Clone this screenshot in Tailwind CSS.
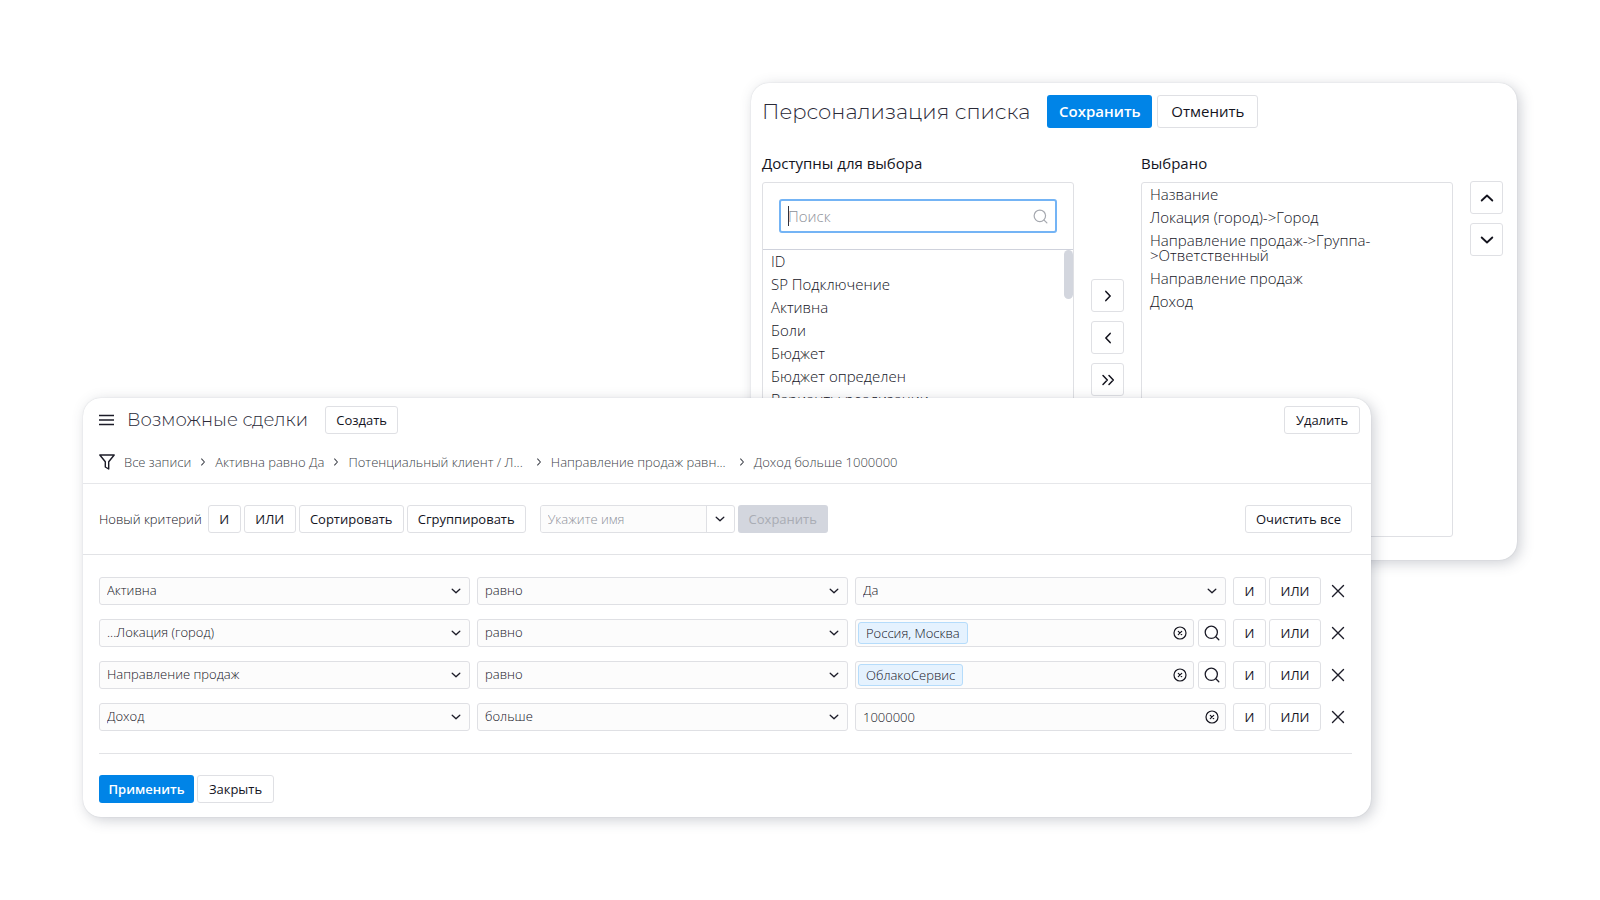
<!DOCTYPE html>
<html lang="ru">
<head>
<meta charset="utf-8">
<meta name="viewport" content="width=device-width, initial-scale=1">
<title>Возможные сделки</title>
<script src="https://cdn.jsdelivr.net/npm/@tailwindcss/browser@4"></script>
</head>
<body class="min-h-screen bg-white font-['Open_Sans',sans-serif] text-[13px] leading-5 font-light text-[#14141e]">

<svg class="hidden" aria-hidden="true">
  <symbol id="down" viewBox="0 0 10 10"><path d="M1.2 3.2 5 6.8 8.8 3.2" fill="none" stroke="currentColor" stroke-width="1.3" stroke-linecap="round" stroke-linejoin="round"/></symbol>
  <symbol id="search" viewBox="0 0 16 16"><circle cx="7.3" cy="7.3" r="6.1" fill="none" stroke="currentColor" stroke-width="1.3"/><path d="m11.8 11.8 3 3" stroke="currentColor" stroke-width="1.3" stroke-linecap="round"/></symbol>
  <symbol id="clear" viewBox="0 0 14 14"><g fill="none" stroke="currentColor" stroke-width="1.2" stroke-linecap="round"><circle cx="7" cy="7" r="6"/><path d="m5.300 5.300 3.400 3.400M8.700 5.300 5.300 8.700"/></g></symbol>
  <symbol id="cross" viewBox="0 0 14 14"><path d="m1.500 1.500 11 11m0-11-11 11" fill="none" stroke="currentColor" stroke-width="1.4" stroke-linecap="round"/></symbol>
</svg>

<main class="px-[83px] py-[83px]">

  <section aria-labelledby="list-title" class="ml-[668px] rounded-[18px] bg-white px-[11px] pt-3 pb-[23px] text-[15px] text-[#14141e] shadow-[0_0_1px_rgba(60,70,90,0.25),3px_3px_14px_rgba(60,70,90,0.26)]">
    <header class="flex items-center">
      <h1 id="list-title" class="mr-[17px] font-[Montserrat,Inter,sans-serif] text-[21px] leading-[33px] font-light whitespace-nowrap text-[#2a2a38]">Персонализация списка</h1>
      <button type="button" class="mr-[5px] h-[33px] w-[105px] rounded-[3px] bg-[#0084e7] pb-0.5 font-semibold text-white">Сохранить</button>
      <button type="button" class="h-[33px] w-[101px] rounded-[3px] border border-[#dfe0e4] pb-0.5 font-medium">Отменить</button>
    </header>

    <div class="mt-[25px] flex">
      <div class="min-w-0 flex-1">
        <h2 id="available" class="font-medium">Доступны для выбора</h2>
        <div class="mt-[9px] h-[355px] overflow-hidden rounded-[3px] border border-[#dfe0e4]">
          <div class="relative border-b border-[#cfd2dc] p-4">
            <input type="search" aria-label="Поиск" placeholder="Поиск" class="block h-[34px] w-full rounded-[3px] border-2 border-[#74b4f5] px-[7px] text-[15px] outline-none placeholder:text-[#8c9099]">
            <span class="absolute top-[23px] left-[25px] h-5 w-px bg-[#30303c]"></span>
            <svg class="absolute top-[26px] right-[25px] size-[15px] text-[#a6a9b0]"><use href="#search"/></svg>
          </div>
          <div class="flex items-start">
            <ul role="listbox" aria-labelledby="available" class="flex-1 px-2 leading-[15px]">
              <li role="option" class="py-1">ID</li>
              <li role="option" class="py-1">SP Подключение</li>
              <li role="option" class="py-1">Активна</li>
              <li role="option" class="py-1">Боли</li>
              <li role="option" class="py-1">Бюджет</li>
              <li role="option" class="py-1">Бюджет определен</li>
              <li role="option" class="py-1">Варианты реализации</li>
            </ul>
            <span class="h-[49px] w-[9px] rounded-full bg-[#d3d6de]"></span>
          </div>
        </div>
      </div>

      <div class="mx-[17px] mt-[126px] flex flex-col gap-[9px]">
        <button type="button" aria-label="Добавить" class="grid size-[33px] place-items-center rounded-[3px] border border-[#dfe0e4]"><svg class="size-3 -rotate-90"><use href="#down"/></svg></button>
        <button type="button" aria-label="Убрать" class="grid size-[33px] place-items-center rounded-[3px] border border-[#dfe0e4]"><svg class="size-3 rotate-90"><use href="#down"/></svg></button>
        <button type="button" aria-label="Добавить все" class="grid size-[33px] place-items-center rounded-[3px] border border-[#dfe0e4]"><svg class="h-3 w-3.5" viewBox="0 0 14 12" fill="none" stroke="currentColor" stroke-width="1.5" stroke-linecap="round" stroke-linejoin="round"><path d="m2 1.500 4.300 4.500L2 10.500M8 1.500 12.300 6 8 10.500"/></svg></button>
      </div>

      <div class="min-w-0 flex-1">
        <h2 id="chosen" class="font-medium">Выбрано</h2>
        <ul role="listbox" aria-labelledby="chosen" class="mt-[9px] h-[355px] rounded-[3px] border border-[#dfe0e4] px-2 leading-[15px]">
          <li role="option" class="py-1">Название</li>
          <li role="option" class="py-1">Локация (город)-&gt;Город</li>
          <li role="option" class="py-1">Направление продаж-&gt;Группа-<br>&gt;Ответственный</li>
          <li role="option" class="py-1">Направление продаж</li>
          <li role="option" class="py-1">Доход</li>
        </ul>
      </div>

      <div class="mt-7 mr-[3px] ml-[17px] flex flex-col gap-[9px]">
        <button type="button" aria-label="Выше" class="grid size-[33px] place-items-center rounded-[3px] border border-[#dfe0e4]"><svg class="size-3.5 rotate-180"><use href="#down"/></svg></button>
        <button type="button" aria-label="Ниже" class="grid size-[33px] place-items-center rounded-[3px] border border-[#dfe0e4]"><svg class="size-3.5"><use href="#down"/></svg></button>
      </div>
    </div>
  </section>

  <section aria-labelledby="deals-title" class="relative -mt-[162px] mr-[146px] rounded-[18px] bg-white pb-3.5 shadow-[0_0_1px_rgba(60,70,90,0.25),3px_3px_14px_rgba(60,70,90,0.26)]">
    <header class="flex items-center pt-[7px] pr-[11px] pl-4">
      <button type="button" aria-label="Меню" class="mr-3 pt-px text-[#1c1c28]"><svg class="h-3 w-4" viewBox="0 0 16 12" stroke="currentColor" stroke-width="1.3"><path d="M0 1.500h15M0 6h15M0 10.500h15"/></svg></button>
      <h1 id="deals-title" class="mr-[17px] pt-px font-[Montserrat,Inter,sans-serif] text-[18px] leading-7 font-light whitespace-nowrap text-[#2a2a38]">Возможные сделки</h1>
      <button type="button" class="h-7 w-[73px] rounded-[3px] border border-[#dfe0e4] font-medium">Создать</button>
      <button type="button" class="ml-auto h-7 w-[76px] rounded-[3px] border border-[#dfe0e4] font-medium">Удалить</button>
    </header>

    <nav aria-label="Фильтр" class="mt-[18px] flex items-center border-b border-[#e6e7ea] pb-[11px] pl-4 text-[#3c3f48]">
      <svg class="mr-[9px] size-4 text-[#1c1c28]" viewBox="0 0 16 16" fill="none" stroke="currentColor" stroke-width="1.4" stroke-linejoin="round"><path d="M.8 1h14.400L9.700 7.800V15L6.300 13V7.800Z"/></svg>
      <a href="#">Все записи</a>
      <svg class="mx-2 size-2 -rotate-90"><use href="#down"/></svg>
      <a href="#">Активна равно Да</a>
      <svg class="mx-2 size-2 -rotate-90"><use href="#down"/></svg>
      <a href="#">Потенциальный клиент / Л...</a>
      <svg class="mr-2 ml-3 size-2 -rotate-90"><use href="#down"/></svg>
      <a href="#">Направление продаж равн...</a>
      <svg class="mr-2 ml-3 size-2 -rotate-90"><use href="#down"/></svg>
      <a href="#">Доход больше 1000000</a>
    </nav>

    <div class="flex items-center gap-[3px] border-b border-[#e2e3e6] py-[21px] pr-[19px] pl-4">
      <span class="mr-[3px]">Новый критерий</span>
      <button type="button" class="h-7 w-[33px] rounded-[3px] border border-[#dfe0e4] font-medium">И</button>
      <button type="button" class="h-7 w-[52px] rounded-[3px] border border-[#dfe0e4] font-medium">ИЛИ</button>
      <button type="button" class="h-7 w-[105px] rounded-[3px] border border-[#dfe0e4] font-medium">Сортировать</button>
      <button type="button" class="h-7 w-[119px] rounded-[3px] border border-[#dfe0e4] font-medium">Сгруппировать</button>
      <div class="ml-[11px] flex h-7 w-[195px] overflow-hidden rounded-[3px] border border-[#dfe0e4]">
        <input type="text" aria-label="Имя фильтра" placeholder="Укажите имя" class="min-w-0 flex-1 bg-[#fcfcfc] px-[7px] outline-none placeholder:text-[#8c9099]">
        <button type="button" aria-label="Показать имена" class="grid w-7 place-items-center border-l border-[#dfe0e4] text-[#1c1c28]"><svg class="size-2.5"><use href="#down"/></svg></button>
      </div>
      <button type="button" disabled class="h-7 w-[90px] rounded-[3px] bg-[#d3d6de] font-medium text-[#a9acb4]">Сохранить</button>
      <button type="button" class="ml-auto h-7 w-[107px] rounded-[3px] border border-[#dfe0e4] font-medium">Очистить все</button>
    </div>

    <form class="pr-[19px] pl-4">
      <div id="rows" class="flex flex-col gap-3.5 border-b border-[#e2e3e6] py-[22px]"></div>
      <div class="mt-[21px] flex gap-[3px]">
        <button type="button" class="h-7 w-[95px] rounded-[3px] bg-[#0084e7] font-semibold text-white">Применить</button>
        <button type="button" class="h-7 w-[77px] rounded-[3px] border border-[#dfe0e4] font-medium">Закрыть</button>
      </div>
    </form>
  </section>
</main>

<script>
  const select = (label, value) => `
    <div class="relative min-w-0">
      <select aria-label="${label}" class="block h-7 w-full appearance-none rounded-[3px] border border-[#dfe0e4] bg-[#fcfcfc] px-[7px] pb-0.5"><option>${value}</option></select>
      <svg class="pointer-events-none absolute top-[9px] right-[9px] size-2.5 text-[#1c1c28]"><use href="#down"/></svg>
    </div>`;
  const lookup = (value) => `
    <div class="flex min-w-0 gap-1">
      <div class="flex h-7 flex-1 items-center justify-between rounded-[3px] border border-[#dfe0e4] bg-[#fcfcfc] pr-[6px] pl-[2px]">
        <span class="h-[22px] rounded-[3px] border border-[#b5dcfb] bg-[#e5f2fe] px-[7px] leading-5">${value}</span>
        <button type="button" aria-label="Очистить"><svg class="size-3.5"><use href="#clear"/></svg></button>
      </div>
      <button type="button" aria-label="Найти" class="grid size-7 place-items-center rounded-[3px] border border-[#dfe0e4] text-[#1c1c28]"><svg class="size-4"><use href="#search"/></svg></button>
    </div>`;
  const text = (value) => `
    <div class="flex h-7 min-w-0 items-center rounded-[3px] border border-[#dfe0e4] bg-[#fcfcfc] pr-[6px] pl-[7px]">
      <input type="text" aria-label="Значение" value="${value}" class="min-w-0 flex-1 outline-none">
      <button type="button" aria-label="Очистить"><svg class="size-3.5"><use href="#clear"/></svg></button>
    </div>`;
  const criteria = [
    ['Активна', 'равно', select('Значение', 'Да')],
    ['...Локация (город)', 'равно', lookup('Россия, Москва')],
    ['Направление продаж', 'равно', lookup('ОблакоСервис')],
    ['Доход', 'больше', text('1000000')],
  ];
  document.getElementById('rows').innerHTML = criteria.map(([field, op, value]) => `
    <div class="grid grid-cols-[1fr_1fr_1fr_auto] items-center gap-[7px]">
      ${select('Поле', field)}${select('Условие', op)}${value}
      <div class="flex items-center gap-[3px] pr-[7px]">
        <button type="button" class="h-7 w-[33px] rounded-[3px] border border-[#dfe0e4] font-medium">И</button>
        <button type="button" class="h-7 w-[52px] rounded-[3px] border border-[#dfe0e4] font-medium">ИЛИ</button>
        <button type="button" aria-label="Удалить критерий" class="ml-[7px] text-[#1c1c28]"><svg class="size-3.5"><use href="#cross"/></svg></button>
      </div>
    </div>`).join('');
</script>
</body>
</html>
